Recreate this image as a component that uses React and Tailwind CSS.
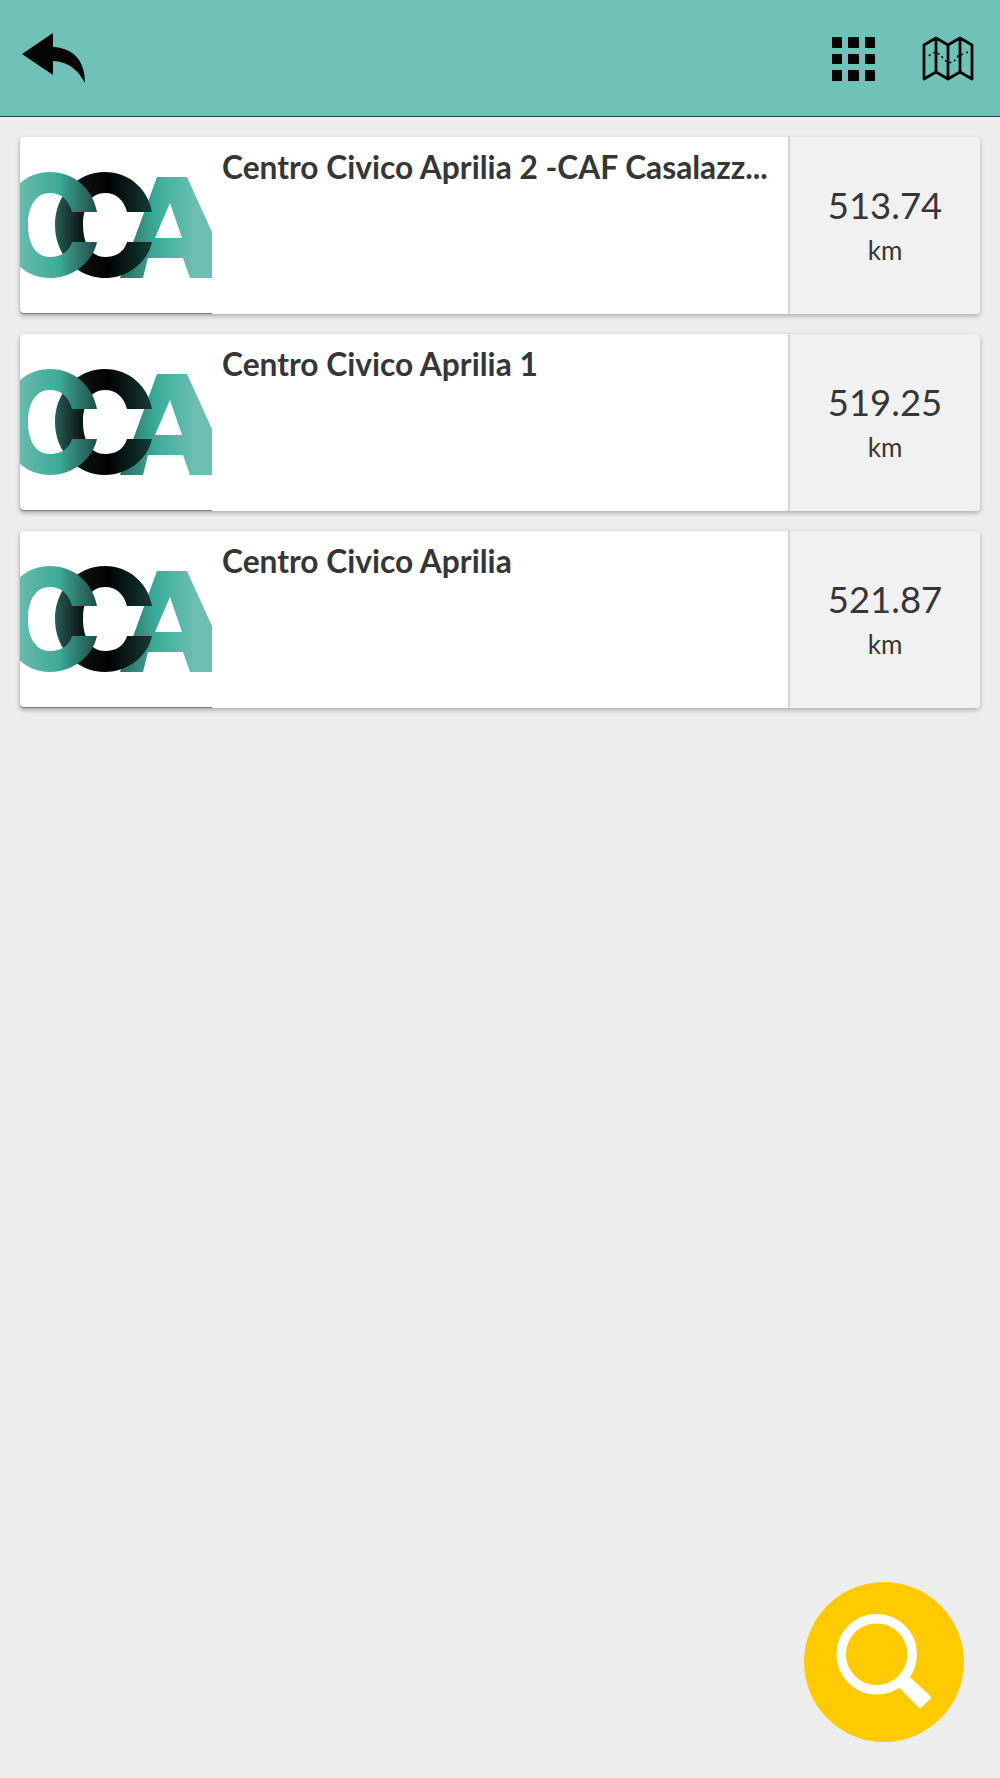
const places = [
    { name: "Centro Civico Aprilia 2 -CAF Casalazz...", distance: "513.74" },
    { name: "Centro Civico Aprilia 1", distance: "519.25" },
    { name: "Centro Civico Aprilia", distance: "521.87" },
];

const BackIcon = () => (
    <svg viewBox="0 0 70 54" className="w-[70px] h-[54px]">
        <path
            d="M2 23 L33 2 V16 C52 17 65 28 65 52 C60 43 52 31 33 30 V44 Z"
            fill="#050505"
        />
    </svg>
);

const GridIcon = () => (
    <div className="grid grid-cols-3 gap-[6px] mt-[2px]">
        {[...Array(9).keys()].map(i => (
            <div key={i} className="w-[10.5px] h-[10.5px] bg-[#050505]" />
        ))}
    </div>
);

const MapIcon = () => (
    <svg viewBox="0 0 52 46" className="w-[52px] h-[46px] mt-[2px]" fill="none" stroke="#050505">
        <path
            d="M2 9 L14 2 L26 9 L38 2 L50 9 V43 L38 36 L26 43 L14 36 L2 43 Z M14 2 V36 M26 9 V43 M38 2 V36"
            strokeWidth="2.8"
            strokeLinejoin="round"
        />
        <path d="M7 20 Q13 12 21 22 T36 20 L46 16" strokeWidth="1.6" strokeDasharray="2 3" />
    </svg>
);

// logo is two overlapping C rings and an A, cut off at the thumbnail edges
const Logo = ({ id }) => (
    <svg viewBox="0 0 192 176" className="w-full h-full">
        <defs>
            <linearGradient id={`c1-${id}`} gradientUnits="userSpaceOnUse" x1="0" x2="78" y1="0" y2="0">
                <stop offset="0" stopColor="#68baad" />
                <stop offset="0.5" stopColor="#3bab98" />
                <stop offset="0.72" stopColor="#2f7d71" />
                <stop offset="1" stopColor="#1f4d46" />
            </linearGradient>
            <linearGradient id={`c2-${id}`} gradientUnits="userSpaceOnUse" x1="35" x2="133" y1="0" y2="0">
                <stop offset="0" stopColor="#255f56" />
                <stop offset="0.3" stopColor="#0a0f0e" />
                <stop offset="0.55" stopColor="#020303" />
                <stop offset="1" stopColor="#143d37" />
            </linearGradient>
            <linearGradient id={`a-${id}`} gradientUnits="userSpaceOnUse" x1="100" x2="175" y1="0" y2="0">
                <stop offset="0" stopColor="#2b6a60" />
                <stop offset="0.5" stopColor="#3bae9b" />
                <stop offset="1" stopColor="#6cbfb2" />
            </linearGradient>
            <clipPath id={`frame-${id}`}>
                <rect width="192" height="176" />
            </clipPath>
        </defs>
        <g clipPath={`url(#frame-${id})`}>
            <path
                d="M100 141 L137 40 H167 L213 141 H170 L163 121 H128 L123 141 Z M150 66 L135 101 H162 Z"
                fill={`url(#a-${id})`}
                fillRule="evenodd"
            />
            <path
                d="M132 75 C128 52 109 35 85 35 C57 35 35 58 35 88 C35 118 57 141 85 141 C109 141 128 124 132 105 H107 C104 115 96 120 85 120 C71 120 63 107 63 88 C63 69 71 56 85 56 C96 56 104 63 107 75 Z"
                fill={`url(#c2-${id})`}
            />
            <path
                d="M77 75 C73 52 54 35 30 35 C2 35 -17 58 -17 88 C-17 118 2 141 30 141 C54 141 73 124 77 105 H52 C49 115 41 120 30 120 C16 120 8 107 8 88 C8 69 16 56 30 56 C41 56 49 63 52 75 Z"
                fill={`url(#c1-${id})`}
            />
        </g>
    </svg>
);

const SearchIcon = () => (
    <svg viewBox="0 0 160 160" className="w-[160px] h-[160px]" fill="none" stroke="white">
        <circle cx="72.7" cy="72.3" r="35.5" strokeWidth="9.5" />
        <path d="M105 97 L97.5 105 L116 124 L125 115.5 Z" fill="white" strokeWidth="4" strokeLinejoin="round" />
    </svg>
);

const PlaceCard = ({ place, id }) => (
    <li className="flex h-[177px] rounded-[4px] shadow-[0_2px_5px_rgba(0,0,0,0.28)]">
        <div className="w-[192px] h-[176px] bg-white rounded-l-[4px] overflow-hidden shadow-[0_1px_1px_rgba(0,0,0,0.5)]">
            <Logo id={id} />
        </div>
        <div className="flex-1 min-w-0 bg-white pl-[10px] pt-[10px]">
            <div className="whitespace-nowrap text-[31.7px] leading-[40px] font-bold text-[#363636]">{place.name}</div>
        </div>
        <div className="w-[192px] flex flex-col items-center bg-[#f1f1f1] border-l-2 border-[#d6d6d6] rounded-r-[4px] text-[#363636]">
            <div className="mt-[43px] text-[36.5px] leading-[50px]">{place.distance}</div>
            <div className="mt-[4px] text-[26px] leading-[32px]">km</div>
        </div>
    </li>
);

export default function App() {
    return (
        <div className="relative min-h-[1778px] bg-[#ededed] font-['Lato',sans-serif]">
            <header className="flex items-center h-[117px] bg-[#70c1b8] border-b border-[#1d4a44] pl-[20px] pr-[26px]">
                <BackIcon />
                <div className="ml-auto mr-[47px]">
                    <GridIcon />
                </div>
                <MapIcon />
            </header>
            <ul className="flex flex-col gap-[20px] px-[20px] pt-[20px]">
                {places.map((place, i) => (
                    <PlaceCard key={place.distance} place={place} id={i} />
                ))}
            </ul>
            <button className="absolute left-[804px] top-[1582px] w-[160px] h-[160px] rounded-full bg-[#ffcb00]">
                <SearchIcon />
            </button>
        </div>
    );
}
